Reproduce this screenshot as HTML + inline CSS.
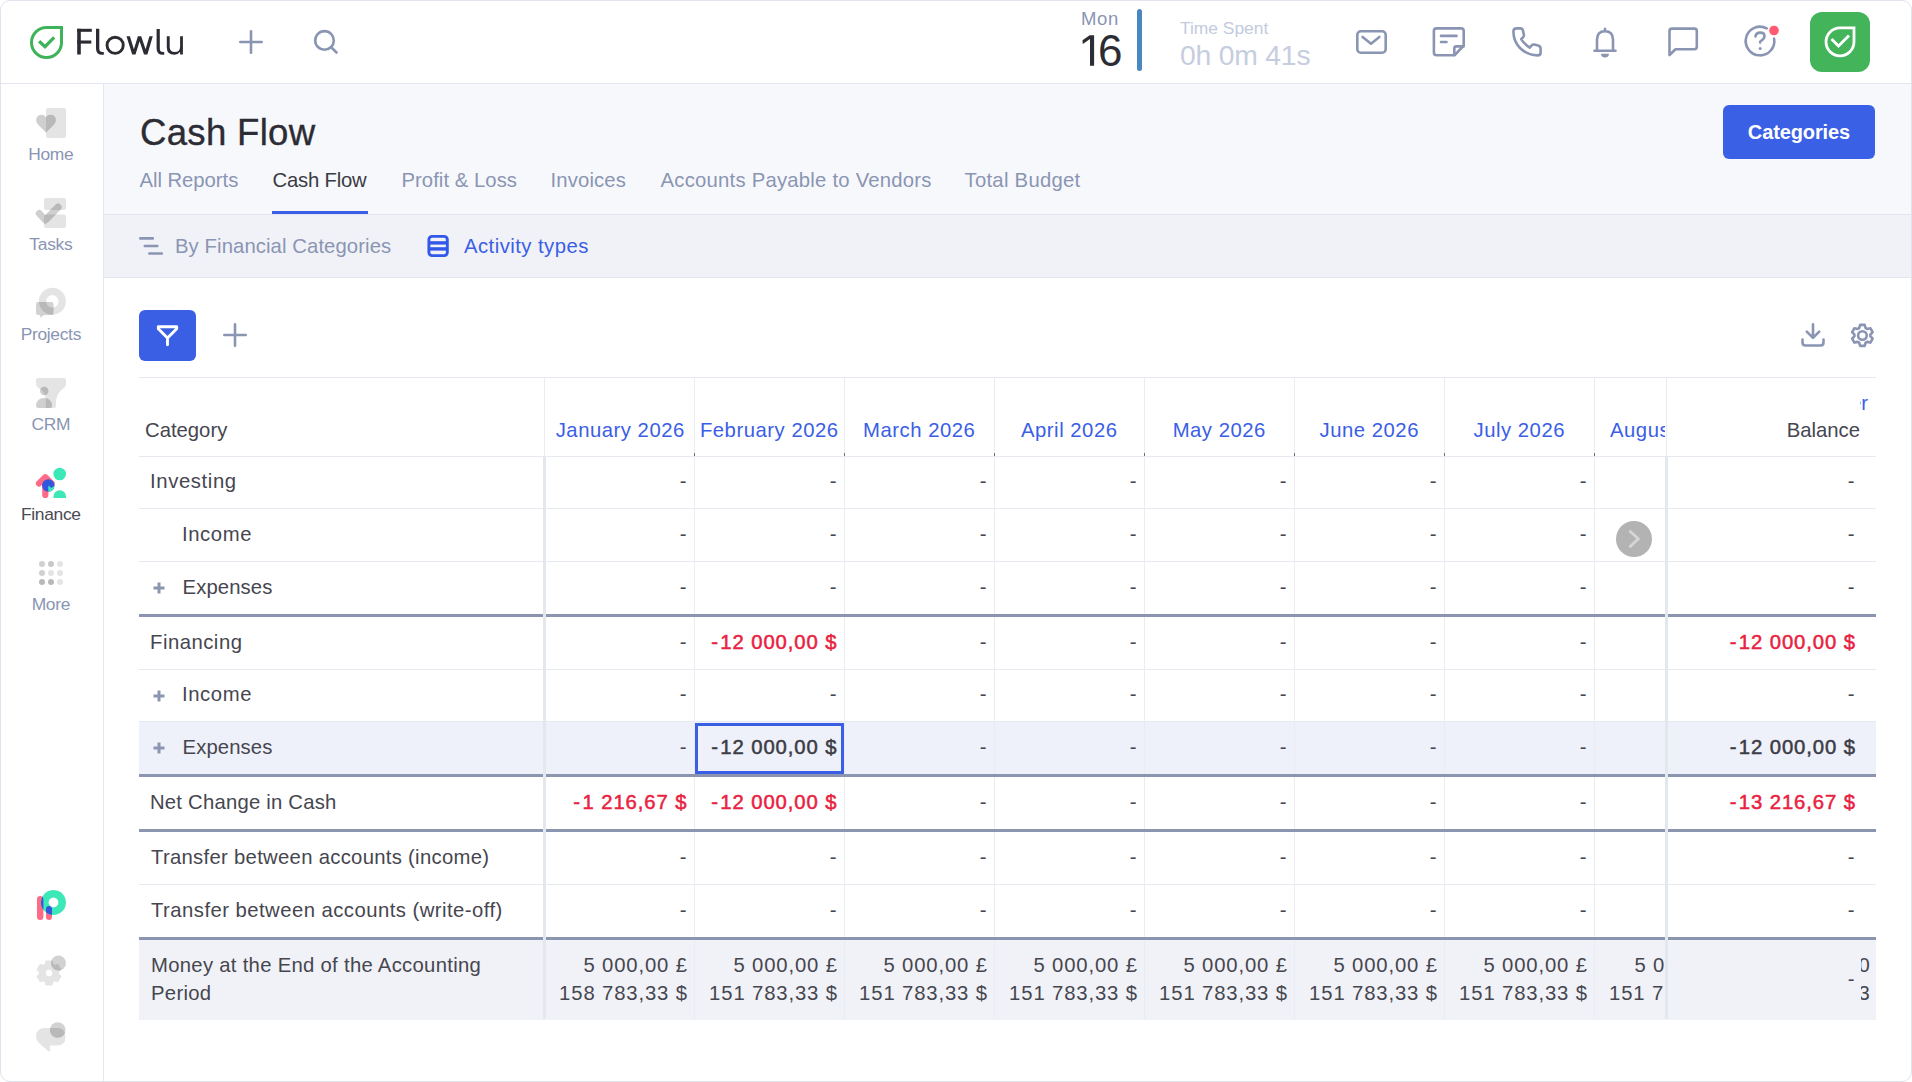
<!DOCTYPE html>
<html><head><meta charset="utf-8"><title>Cash Flow</title>
<style>
html,body{margin:0;padding:0;width:1912px;height:1082px;overflow:hidden;background:#ffffff;}
body{font-family:"Liberation Sans",sans-serif;position:relative;}
.frame{position:absolute;left:0;top:0;width:1912px;height:1082px;overflow:hidden;background:#fff;}
.bord{position:absolute;left:0;top:0;width:1912px;height:1082px;box-sizing:border-box;border:1px solid #e1e4ef;border-radius:10px;z-index:50;}
.t{position:absolute;white-space:nowrap;}
.abs{position:absolute;}
svg{position:absolute;overflow:visible;}
</style></head><body>
<div class="frame">
<div class="abs" style="left:0;top:83px;width:1912px;height:1px;background:#e4e7ef"></div>
<div class="abs" style="left:103px;top:84px;width:1px;height:1000px;background:#e4e7ef"></div>
<div class="abs" style="left:104px;top:84px;width:1808px;height:130px;background:#f7f8fc"></div>
<div class="abs" style="left:104px;top:214px;width:1808px;height:1px;background:#e3e6ee"></div>
<div class="abs" style="left:104px;top:215px;width:1808px;height:62px;background:#f1f2f7"></div>
<div class="abs" style="left:104px;top:277px;width:1808px;height:1px;background:#e3e6ee"></div>
<svg style="left:0;top:0" width="1912" height="84" viewBox="0 0 1912 84">
<path d="M46.5,27.5 H61.5 V42.5 A15,15 0 1 1 46.5,27.5 Z" fill="none" stroke="#3fb35a" stroke-width="3"/>
<path d="M39.1,41.2 L45,46.6 L54.2,37.4" fill="none" stroke="#3fb35a" stroke-width="3.3"/>
<g fill="none" stroke="#8a95b3" stroke-width="2.6" stroke-linecap="round" stroke-linejoin="round">
<path d="M240.3,42 H261.7 M251,31.3 V52.7"/>
<circle cx="324.5" cy="40.4" r="9.3"/><path d="M331.5,47.5 L336.5,52.5"/>
<rect x="1357.3" y="31.3" width="28.4" height="21.4" rx="3.5"/>
<path d="M1362.6,37 L1371,43.7 L1379.4,37"/>
<path d="M1454.5,55.3 H1436.6 Q1433.9,55.3 1433.9,52.6 V31.1 Q1433.9,28.4 1436.6,28.4 H1461 Q1463.7,28.4 1463.7,31.1 V45.5 Z"/>
<path d="M1454.3,55 V48.5 Q1454.3,46.4 1456.4,46.4 H1463.5"/>
<path d="M1441,35.9 H1456.5 M1441,42 H1446.5"/>
<path d="M1516.5,28.4 H1520.5 Q1522.3,28.4 1522.8,30.2 L1523.9,34.6 Q1524.2,36.2 1523,37.3 L1521.2,39.1 Q1524.5,44.5 1529.8,47.6 L1531.6,45.5 Q1532.7,44.3 1534.3,44.6 L1538,45.4 Q1540.6,46 1540.6,48.6 V52.4 Q1540.6,55.4 1537.6,55.4 Q1527,55 1520,48 Q1513.6,41.5 1513.4,31.6 Q1513.4,28.4 1516.5,28.4 Z"/>
<path d="M1605,28.7 V31 M1597,50 V39.5 Q1597,31.2 1605,31.2 Q1613,31.2 1613,39.5 V50 M1594.5,50.8 H1615.5"/>
<path d="M1669.5,55 V31 Q1669.5,28.6 1672,28.6 H1694.5 Q1696.8,28.6 1696.8,31 V46.8 Q1696.8,49.2 1694.5,49.2 H1675.5 Z"/>
<path d="M1766.7,28.4 A14.3,14.3 0 1 0 1774.1,38.6"/>
<path d="M1755.5,36.5 Q1756,32.6 1760.3,32.6 Q1764.5,32.6 1764.5,36.3 Q1764.5,39 1760.2,41.5 V42.5"/>
</g>
<circle cx="1760.2" cy="48.5" r="1.5" fill="#8a95b3"/>
<path d="M1601,53.8 H1609 A4,3.6 0 0 1 1601,53.8 Z" fill="#8a95b3"/>
<circle cx="1774" cy="30.5" r="4.8" fill="#ff5a72"/>
<rect x="1810" y="12" width="60" height="60" rx="12" fill="#43b45a"/>
<path d="M1840,27.8 H1854 V41.8 A14,14 0 1 1 1840,27.8 Z" fill="none" stroke="#fff" stroke-width="2.8"/>
<path d="M1832.5,40 L1838.5,46 L1848,36.5" fill="none" stroke="#fff" stroke-width="2.8" stroke-linecap="square"/>
<rect x="1137" y="9" width="5" height="62" rx="2.5" fill="#4a86bf"/>
</svg>
<svg style="left:0;top:0" width="200" height="84" viewBox="0 0 200 84"><g fill="#2b2b33">
<rect x="77.2" y="28.8" width="3.6" height="25.7"/><rect x="77.2" y="28.8" width="14.6" height="3"/><rect x="77.2" y="40.5" width="14.1" height="3.1"/>
<path d="M96,28.8 H99.3 V48.8 Q99.3,52.1 102.6,52.1 H103.8 V54.8 H102.3 Q96,54.8 96,48.5 Z"/>
<path d="M126.5,36.2 H129.9 L133.87,49.23 L137.9,36.2 H141.2 L145.58,49.2 L149.4,36.2 H152.8 L147.4,54.6 H144 L139.61,41.35 L135.5,54.6 H132.2 Z"/>
<path d="M156.6,28.9 H159.8 V48.8 Q159.8,52 163,52 H164.2 V54.8 H162.8 Q156.6,54.8 156.6,48.5 Z"/>
<path d="M166.8,36.2 H169.7 V47 Q169.7,52.1 174.9,52.1 Q180.1,52.1 180.1,46.5 V36.2 H182.9 V54.6 H180.1 V51.8 Q178,54.8 174.5,54.8 Q166.8,54.8 166.8,47.2 Z"/>
</g><circle cx="115.15" cy="45.3" r="8.1" fill="none" stroke="#2b2b33" stroke-width="2.9"/></svg>
<div class="t " style="top:7.00px;font-size:18.5px;line-height:23px;color:#8a95b3;letter-spacing:0.7px;left:1081px;">Mon</div>
<div class="t " style="top:23.00px;font-size:44px;line-height:55px;color:#2c2c34;left:1098px;">6</div>
<svg style="left:0;top:0" width="1100" height="80" viewBox="0 0 1100 80"><path d="M1082.5,40.2 L1089.7,35.2 H1094.1 V65.8 H1090 V38.9 L1082.8,44 Z" fill="#2c2c34"/></svg>
<div class="t " style="top:16.70px;font-size:17.4px;line-height:22px;color:#c3cbdd;left:1180px;">Time Spent</div>
<div class="t " style="top:38.00px;font-size:28.3px;line-height:35px;color:#c5cddf;letter-spacing:-0.2px;left:1180px;">0h 0m 41s</div>
<svg style="left:0;top:0" width="104" height="1082" viewBox="0 0 104 1082">
<defs>
<clipPath id="cHome"><rect x="46" y="108" width="20" height="30" rx="2"/></clipPath>
<clipPath id="cTasks"><rect x="44" y="198" width="22" height="12" rx="2"/><rect x="44" y="214.5" width="22" height="13.5" rx="2"/></clipPath>
<clipPath id="cProj"><path d="M52.4,287.8 A13.5,13.5 0 1 1 52.39,287.8 Z M52.4,295.1 A6.2,6.2 0 1 0 52.41,295.1 Z" clip-rule="evenodd"/></clipPath>
<clipPath id="cCrm"><path d="M38,378 H64 Q66,378 66,380 V384 Q66,386.5 64,388 C59,391.5 56,396 56,403 V406 Q56,408 54,408 H45.8 V398.5 Q44.5,391 38,387.5 Q36,386 36,384 V380 Q36,378 38,378 Z"/></clipPath>
<clipPath id="cGear"><circle cx="58.5" cy="963" r="7.5"/></clipPath>
<clipPath id="cChat"><circle cx="57.7" cy="1030" r="7.8"/></clipPath>
<clipPath id="cRing"><path d="M53.5,889.9 A12.5,12.5 0 1 1 53.49,889.9 Z M53.5,897.5 A4.9,4.9 0 1 0 53.51,897.5 Z" clip-rule="evenodd"/></clipPath>
</defs>
<!-- Home -->
<rect x="46" y="108" width="20" height="30" rx="2" fill="#e4e4e4"/>
<path id="heart" d="M46,132.5 L38.2,124.7 C35.3,121.8 35.6,117 39,115.3 C42,113.8 44.8,115 46,117.5 C47.2,115 50,113.8 53,115.3 C56.4,117 56.7,121.8 53.8,124.7 Z" fill="#cfcfcf"/>
<g clip-path="url(#cHome)"><path d="M46,132.5 L38.2,124.7 C35.3,121.8 35.6,117 39,115.3 C42,113.8 44.8,115 46,117.5 C47.2,115 50,113.8 53,115.3 C56.4,117 56.7,121.8 53.8,124.7 Z" fill="#b9b9b9"/></g>
<!-- Tasks -->
<rect x="44" y="198" width="22" height="12" rx="2" fill="#e4e4e4"/>
<rect x="44" y="214.5" width="22" height="13.5" rx="2" fill="#e4e4e4"/>
<path d="M39.3,213.5 L45.3,220 L58,207.3" fill="none" stroke="#cfcfcf" stroke-width="7" stroke-linecap="round" stroke-linejoin="round"/>
<g clip-path="url(#cTasks)"><path d="M39.3,213.5 L45.3,220 L58,207.3" fill="none" stroke="#b9b9b9" stroke-width="7" stroke-linecap="round" stroke-linejoin="round"/></g>
<!-- Projects -->
<circle cx="52.4" cy="301.3" r="9.85" fill="none" stroke="#e4e4e4" stroke-width="7.3"/>
<path d="M38,302 H51.5 Q53.5,302 53.5,304 V313 Q53.5,315 51.5,315 H44 L40.6,317.8 L40,315 H38 Q36,315 36,313 V304 Q36,302 38,302 Z" fill="#d2d2d2"/>
<g clip-path="url(#cProj)"><path d="M38,302 H51.5 Q53.5,302 53.5,304 V313 Q53.5,315 51.5,315 H44 L40.6,317.8 L40,315 H38 Q36,315 36,313 V304 Q36,302 38,302 Z" fill="#b9b9b9"/></g>
<!-- CRM -->
<path d="M38,378 H64 Q66,378 66,380 V384 Q66,386.5 64,388 C59,391.5 56,396 56,403 V406 Q56,408 54,408 H45.8 V398.5 Q44.5,391 38,387.5 Q36,386 36,384 V380 Q36,378 38,378 Z" fill="#e4e4e4"/>
<circle cx="44.2" cy="391" r="4.2" fill="#cfcfcf"/>
<path d="M36,405.5 C36,401 39.5,398 44,398 C48.5,398 52,401 52,405.5 Q52,408 49.5,408 H38.5 Q36,408 36,405.5 Z" fill="#d0d0d0"/>
<g clip-path="url(#cCrm)"><circle cx="44.2" cy="391" r="4.2" fill="#b9b9b9"/><path d="M36,405.5 C36,401 39.5,398 44,398 C48.5,398 52,401 52,405.5 Q52,408 49.5,408 H38.5 Q36,408 36,405.5 Z" fill="#b9b9b9"/></g>
<!-- Finance -->
<path d="M39,483.5 L45.3,477.2 L51.6,483.5 M45.3,477.5 V495" fill="none" stroke="#ff6b86" stroke-width="6.2" stroke-linecap="round" stroke-linejoin="round"/>
<circle cx="48.3" cy="485.5" r="6.2" fill="#3256dc"/>
<path d="M48.3,485.5 L51.5,488 Q53,486.5 54.5,486 A6.2,6.2 0 0 1 48.3,491.7 Z" fill="#3de8b8"/>
<circle cx="59.7" cy="474" r="6.3" fill="#3de8b8"/>
<path d="M53.5,498 V496.5 A6.25,6.25 0 0 1 66,496.5 V498 Z" fill="#3de8b8"/>
<!-- More -->
<g>
<circle cx="42" cy="564" r="3" fill="#d0d0d0"/><circle cx="51" cy="564" r="3" fill="#c9c9c9"/><circle cx="60" cy="564" r="3" fill="#e4e4e4"/>
<circle cx="42" cy="573" r="3" fill="#d0d0d0"/><circle cx="51" cy="573" r="3" fill="#e4e4e4"/><circle cx="60" cy="573" r="3" fill="#e4e4e4"/>
<circle cx="42" cy="582" r="3" fill="#b9b9b9"/><circle cx="51" cy="582" r="3" fill="#b9b9b9"/><circle cx="60" cy="582" r="3" fill="#e4e4e4"/>
</g>
<!-- P logo -->
<rect x="37" y="896" width="6.4" height="24" rx="3.2" fill="#ff6b86"/>
<rect x="46" y="906" width="6" height="14" rx="3" fill="#ff6b86"/>
<path d="M53.5,889.9 A12.5,12.5 0 1 1 53.49,889.9 Z M53.5,897.5 A4.9,4.9 0 1 0 53.51,897.5 Z" fill="#3de8b8" fill-rule="evenodd"/>
<g clip-path="url(#cRing)"><rect x="37" y="896" width="6.4" height="24" rx="3.2" fill="#3256dc"/><rect x="46" y="906" width="6" height="14" rx="3" fill="#3256dc"/></g>
<!-- gear -->
<path d="M53.15,963.68 L52.58,960.50 L45.42,960.50 L44.85,963.68 L43.00,964.75 L39.97,963.65 L36.39,969.86 L38.86,971.93 L38.86,974.07 L36.39,976.14 L39.97,982.35 L43.00,981.25 L44.85,982.32 L45.42,985.50 L52.58,985.50 L53.15,982.32 L55.00,981.25 L58.03,982.35 L61.61,976.14 L59.14,974.07 L59.14,971.93 L61.61,969.86 L58.03,963.65 L55.00,964.75Z" fill="#e4e4e4"/>
<circle cx="49" cy="973" r="3.2" fill="#fff"/>
<circle cx="58.5" cy="963" r="7.5" fill="#d2d2d2"/>
<g clip-path="url(#cGear)"><path d="M53.15,963.68 L52.58,960.50 L45.42,960.50 L44.85,963.68 L43.00,964.75 L39.97,963.65 L36.39,969.86 L38.86,971.93 L38.86,974.07 L36.39,976.14 L39.97,982.35 L43.00,981.25 L44.85,982.32 L45.42,985.50 L52.58,985.50 L53.15,982.32 L55.00,981.25 L58.03,982.35 L61.61,976.14 L59.14,974.07 L59.14,971.93 L61.61,969.86 L58.03,963.65 L55.00,964.75Z" fill="#b9b9b9"/></g>
<!-- chat -->
<path d="M45,1028 H57 Q65.5,1028 65.5,1036.8 Q65.5,1045.6 57,1045.6 H49.9 V1050 Q49.9,1052.5 48,1051 L38.5,1042.5 Q36,1040 36,1036.8 Q36,1028 45,1028 Z" fill="#e4e4e4"/>
<circle cx="57.7" cy="1030" r="7.8" fill="#d2d2d2"/>
<g clip-path="url(#cChat)"><path d="M45,1028 H57 Q65.5,1028 65.5,1036.8 Q65.5,1045.6 57,1045.6 H49.9 V1050 Q49.9,1052.5 48,1051 L38.5,1042.5 Q36,1040 36,1036.8 Q36,1028 45,1028 Z" fill="#b9b9b9"/></g>
</svg>
<div class="t " style="top:143.00px;font-size:17.4px;line-height:22px;color:#8a95b3;letter-spacing:-0.3px;left:0.85px;width:100px;text-align:center;">Home</div>
<div class="t " style="top:233.00px;font-size:17.4px;line-height:22px;color:#8a95b3;letter-spacing:-0.3px;left:0.85px;width:100px;text-align:center;">Tasks</div>
<div class="t " style="top:323.00px;font-size:17.4px;line-height:22px;color:#8a95b3;letter-spacing:-0.3px;left:0.85px;width:100px;text-align:center;">Projects</div>
<div class="t " style="top:413.00px;font-size:17.4px;line-height:22px;color:#8a95b3;letter-spacing:-0.3px;left:0.85px;width:100px;text-align:center;">CRM</div>
<div class="t " style="top:503.00px;font-size:17.4px;line-height:22px;color:#4a4a54;letter-spacing:-0.3px;left:0.85px;width:100px;text-align:center;">Finance</div>
<div class="t " style="top:593.00px;font-size:17.4px;line-height:22px;color:#8a95b3;letter-spacing:-0.3px;left:0.85px;width:100px;text-align:center;">More</div>
<div class="t " style="top:110.00px;font-size:36.6px;line-height:46px;color:#2c2c34;letter-spacing:0.3px;left:140px;-webkit-text-stroke:0.35px #2c2c34;">Cash Flow</div>
<div class="t " style="top:168.00px;font-size:20.3px;line-height:25px;color:#8a95b3;letter-spacing:-0.04px;left:139.5px;">All Reports</div>
<div class="t " style="top:168.00px;font-size:20.3px;line-height:25px;color:#3b3b44;letter-spacing:-0.2px;left:272.5px;">Cash Flow</div>
<div class="t " style="top:168.00px;font-size:20.3px;line-height:25px;color:#8a95b3;letter-spacing:0.04px;left:401.5px;">Profit &amp; Loss</div>
<div class="t " style="top:168.00px;font-size:20.3px;line-height:25px;color:#8a95b3;letter-spacing:0.14px;left:550.5px;">Invoices</div>
<div class="t " style="top:168.00px;font-size:20.3px;line-height:25px;color:#8a95b3;letter-spacing:0.23px;left:660.5px;">Accounts Payable to Vendors</div>
<div class="t " style="top:168.00px;font-size:20.3px;line-height:25px;color:#8a95b3;letter-spacing:0.27px;left:964.5px;">Total Budget</div>
<div class="abs" style="left:272px;top:211px;width:96px;height:3px;background:#3a5ee6"></div>
<div class="abs" style="left:1723px;top:105px;width:152px;height:54px;border-radius:6px;background:#3a60e6"></div>
<div class="t " style="top:120.00px;font-size:20px;line-height:25px;color:#ffffff;letter-spacing:-0.12px;font-weight:700;left:1722.94px;width:152px;text-align:center;">Categories</div>
<svg style="left:0;top:0" width="1912" height="400" viewBox="0 0 1912 400">
<g stroke="#8a95b3" stroke-width="2.6" stroke-linecap="round"><path d="M140.3,238.4 H152.8 M144.8,246 H157.3 M149.3,253.5 H161.8"/></g>
<rect x="428.9" y="236.4" width="18.4" height="19.2" rx="3.2" fill="none" stroke="#3158e6" stroke-width="2.9"/>
<rect x="430" y="241.2" width="16" height="3.4" fill="#3158e6"/>
<rect x="430" y="247.2" width="16" height="3.4" fill="#3158e6"/>
<!-- filter button -->
<rect x="139" y="310" width="57" height="51" rx="6" fill="#3a5fe5"/>
<path d="M158.3,326.8 H176.7 V328.8 L167.5,338 L158.3,328.8 Z M167.5,338 V344.7" fill="none" stroke="#fff" stroke-width="2.9" stroke-linejoin="round" stroke-linecap="round"/>
<path d="M224.3,335 H245.7 M235,324.3 V345.7" stroke="#8a95b3" stroke-width="2.6" stroke-linecap="round"/>
<!-- download -->
<g fill="none" stroke="#8a95b3" stroke-width="2.6" stroke-linecap="round" stroke-linejoin="round">
<path d="M1813,324.3 V337.5 M1806.8,331.6 L1813,337.8 L1819.2,331.6"/>
<path d="M1802.5,339.5 V342.5 Q1802.5,345.5 1805.5,345.5 H1820.5 Q1823.5,345.5 1823.5,342.5 V339.5"/>
<path d="M1865.65,328.09 L1864.64,324.88 L1860.16,324.88 L1859.15,328.09 L1857.70,328.93 L1854.41,328.21 L1852.18,332.08 L1854.44,334.56 L1854.44,336.24 L1852.18,338.72 L1854.41,342.59 L1857.70,341.87 L1859.15,342.71 L1860.16,345.92 L1864.64,345.92 L1865.65,342.71 L1867.10,341.87 L1870.39,342.59 L1872.62,338.72 L1870.36,336.24 L1870.36,334.56 L1872.62,332.08 L1870.39,328.21 L1867.10,328.93Z"/>
<circle cx="1862.4" cy="335.5" r="4.3"/>
</g>
</svg>
<div class="t " style="top:234.00px;font-size:20.3px;line-height:25px;color:#8a95b3;letter-spacing:0.09px;left:175px;">By Financial Categories</div>
<div class="t " style="top:234.00px;font-size:20.3px;line-height:25px;color:#3a5ee6;letter-spacing:0.46px;left:464px;">Activity types</div>
<div class="abs" style="left:139px;top:722px;width:1737px;height:52px;background:#eef0fa"></div>
<div class="abs" style="left:139px;top:940px;width:1737px;height:80px;background:#f1f2f7"></div>
<div class="abs" style="left:139px;top:377px;width:1737px;height:1px;background:#e6e9f0"></div>
<div class="abs" style="left:139px;top:456px;width:1737px;height:1px;background:#e6e9f0"></div>
<div class="abs" style="left:139px;top:508px;width:1737px;height:1px;background:#e6e9f0"></div>
<div class="abs" style="left:139px;top:561px;width:1737px;height:1px;background:#e6e9f0"></div>
<div class="abs" style="left:139px;top:614px;width:1737px;height:3px;background:#8b95b0"></div>
<div class="abs" style="left:139px;top:669px;width:1737px;height:1px;background:#e6e9f0"></div>
<div class="abs" style="left:139px;top:721px;width:1737px;height:1px;background:#e6e9f0"></div>
<div class="abs" style="left:139px;top:774px;width:1737px;height:3px;background:#8b95b0"></div>
<div class="abs" style="left:139px;top:829px;width:1737px;height:3px;background:#8b95b0"></div>
<div class="abs" style="left:139px;top:884px;width:1737px;height:1px;background:#e6e9f0"></div>
<div class="abs" style="left:139px;top:937px;width:1737px;height:3px;background:#8b95b0"></div>
<div class="abs" style="left:694px;top:378px;width:1px;height:641px;background:#e9ecf2"></div>
<div class="abs" style="left:694px;top:453px;width:1px;height:3px;background:#6b7080"></div>
<div class="abs" style="left:844px;top:378px;width:1px;height:641px;background:#e9ecf2"></div>
<div class="abs" style="left:844px;top:453px;width:1px;height:3px;background:#6b7080"></div>
<div class="abs" style="left:994px;top:378px;width:1px;height:641px;background:#e9ecf2"></div>
<div class="abs" style="left:994px;top:453px;width:1px;height:3px;background:#6b7080"></div>
<div class="abs" style="left:1144px;top:378px;width:1px;height:641px;background:#e9ecf2"></div>
<div class="abs" style="left:1144px;top:453px;width:1px;height:3px;background:#6b7080"></div>
<div class="abs" style="left:1294px;top:378px;width:1px;height:641px;background:#e9ecf2"></div>
<div class="abs" style="left:1294px;top:453px;width:1px;height:3px;background:#6b7080"></div>
<div class="abs" style="left:1444px;top:378px;width:1px;height:641px;background:#e9ecf2"></div>
<div class="abs" style="left:1444px;top:453px;width:1px;height:3px;background:#6b7080"></div>
<div class="abs" style="left:1594px;top:378px;width:1px;height:641px;background:#e9ecf2"></div>
<div class="abs" style="left:1594px;top:453px;width:1px;height:3px;background:#6b7080"></div>
<div class="abs" style="left:139px;top:614px;width:1737px;height:3px;background:#8b95b0"></div>
<div class="abs" style="left:139px;top:774px;width:1737px;height:3px;background:#8b95b0"></div>
<div class="abs" style="left:139px;top:829px;width:1737px;height:3px;background:#8b95b0"></div>
<div class="abs" style="left:139px;top:937px;width:1737px;height:3px;background:#8b95b0"></div>
<div class="abs" style="left:544px;top:378px;width:1px;height:78px;background:#e9ecf2"></div>
<div class="abs" style="left:1666px;top:378px;width:1px;height:78px;background:#e9ecf2"></div>
<div class="abs" style="left:543px;top:457px;width:3px;height:562px;background:#e3e8ef"></div>
<div class="abs" style="left:1665px;top:457px;width:3px;height:562px;background:#e3e8ef"></div>
<div class="t " style="top:418.00px;font-size:20.3px;line-height:25px;color:#46464f;left:145px;">Category</div>
<div class="t " style="top:418.00px;font-size:20.3px;line-height:25px;color:#3a5ee6;letter-spacing:0.52px;left:545.26px;width:150px;text-align:center;">January 2026</div>
<div class="t " style="top:418.00px;font-size:20.3px;line-height:25px;color:#3a5ee6;letter-spacing:0.52px;left:694.26px;width:150px;text-align:center;">February 2026</div>
<div class="t " style="top:418.00px;font-size:20.3px;line-height:25px;color:#3a5ee6;letter-spacing:0.52px;left:844.26px;width:150px;text-align:center;">March 2026</div>
<div class="t " style="top:418.00px;font-size:20.3px;line-height:25px;color:#3a5ee6;letter-spacing:0.52px;left:994.26px;width:150px;text-align:center;">April 2026</div>
<div class="t " style="top:418.00px;font-size:20.3px;line-height:25px;color:#3a5ee6;letter-spacing:0.52px;left:1144.26px;width:150px;text-align:center;">May 2026</div>
<div class="t " style="top:418.00px;font-size:20.3px;line-height:25px;color:#3a5ee6;letter-spacing:0.52px;left:1294.26px;width:150px;text-align:center;">June 2026</div>
<div class="t " style="top:418.00px;font-size:20.3px;line-height:25px;color:#3a5ee6;letter-spacing:0.52px;left:1444.26px;width:150px;text-align:center;">July 2026</div>
<div class="abs" style="left:1595px;top:400px;width:70px;height:50px;overflow:hidden"><div class="t " style="top:18.00px;font-size:20.3px;line-height:25px;color:#3a5ee6;letter-spacing:0.52px;left:15px;">August 2026</div>
</div>
<div class="t " style="top:418.00px;font-size:20.3px;line-height:25px;color:#46464f;left:1660.00px;width:200px;text-align:right;">Balance</div>
<div class="abs" style="left:1860px;top:390px;width:11px;height:30px;overflow:hidden"><div class="t " style="top:1.00px;font-size:20.3px;line-height:25px;color:#3a5ee6;left:-10.1px;">er</div>
</div>
<div class="t " style="top:469.00px;font-size:20.3px;line-height:25px;color:#46464f;letter-spacing:0.62px;left:150px;">Investing</div>
<div class="t " style="top:469.00px;font-size:20.3px;line-height:25px;color:#46464f;left:538.50px;width:148px;text-align:right;">-</div>
<div class="t " style="top:469.00px;font-size:20.3px;line-height:25px;color:#46464f;left:688.50px;width:148px;text-align:right;">-</div>
<div class="t " style="top:469.00px;font-size:20.3px;line-height:25px;color:#46464f;left:838.50px;width:148px;text-align:right;">-</div>
<div class="t " style="top:469.00px;font-size:20.3px;line-height:25px;color:#46464f;left:988.50px;width:148px;text-align:right;">-</div>
<div class="t " style="top:469.00px;font-size:20.3px;line-height:25px;color:#46464f;left:1138.50px;width:148px;text-align:right;">-</div>
<div class="t " style="top:469.00px;font-size:20.3px;line-height:25px;color:#46464f;left:1288.50px;width:148px;text-align:right;">-</div>
<div class="t " style="top:469.00px;font-size:20.3px;line-height:25px;color:#46464f;left:1438.50px;width:148px;text-align:right;">-</div>
<div class="t " style="top:469.00px;font-size:20.3px;line-height:25px;color:#46464f;left:1654.50px;width:200px;text-align:right;">-</div>
<div class="t " style="top:521.50px;font-size:20.3px;line-height:25px;color:#46464f;letter-spacing:0.6px;left:182px;">Income</div>
<div class="t " style="top:521.50px;font-size:20.3px;line-height:25px;color:#46464f;left:538.50px;width:148px;text-align:right;">-</div>
<div class="t " style="top:521.50px;font-size:20.3px;line-height:25px;color:#46464f;left:688.50px;width:148px;text-align:right;">-</div>
<div class="t " style="top:521.50px;font-size:20.3px;line-height:25px;color:#46464f;left:838.50px;width:148px;text-align:right;">-</div>
<div class="t " style="top:521.50px;font-size:20.3px;line-height:25px;color:#46464f;left:988.50px;width:148px;text-align:right;">-</div>
<div class="t " style="top:521.50px;font-size:20.3px;line-height:25px;color:#46464f;left:1138.50px;width:148px;text-align:right;">-</div>
<div class="t " style="top:521.50px;font-size:20.3px;line-height:25px;color:#46464f;left:1288.50px;width:148px;text-align:right;">-</div>
<div class="t " style="top:521.50px;font-size:20.3px;line-height:25px;color:#46464f;left:1438.50px;width:148px;text-align:right;">-</div>
<div class="t " style="top:521.50px;font-size:20.3px;line-height:25px;color:#46464f;left:1654.50px;width:200px;text-align:right;">-</div>
<div class="t " style="top:574.50px;font-size:20.3px;line-height:25px;color:#46464f;letter-spacing:0.12px;left:182.5px;">Expenses</div>
<svg style="left:150px;top:580.0px" width="18" height="16" viewBox="0 0 18 16"><path d="M3.5,8 H14.5 M9,2.5 V13.5" stroke="#8b95b0" stroke-width="3"/></svg>
<div class="t " style="top:574.50px;font-size:20.3px;line-height:25px;color:#46464f;left:538.50px;width:148px;text-align:right;">-</div>
<div class="t " style="top:574.50px;font-size:20.3px;line-height:25px;color:#46464f;left:688.50px;width:148px;text-align:right;">-</div>
<div class="t " style="top:574.50px;font-size:20.3px;line-height:25px;color:#46464f;left:838.50px;width:148px;text-align:right;">-</div>
<div class="t " style="top:574.50px;font-size:20.3px;line-height:25px;color:#46464f;left:988.50px;width:148px;text-align:right;">-</div>
<div class="t " style="top:574.50px;font-size:20.3px;line-height:25px;color:#46464f;left:1138.50px;width:148px;text-align:right;">-</div>
<div class="t " style="top:574.50px;font-size:20.3px;line-height:25px;color:#46464f;left:1288.50px;width:148px;text-align:right;">-</div>
<div class="t " style="top:574.50px;font-size:20.3px;line-height:25px;color:#46464f;left:1438.50px;width:148px;text-align:right;">-</div>
<div class="t " style="top:574.50px;font-size:20.3px;line-height:25px;color:#46464f;left:1654.50px;width:200px;text-align:right;">-</div>
<div class="t " style="top:629.50px;font-size:20.3px;line-height:25px;color:#46464f;letter-spacing:0.5px;left:150px;">Financing</div>
<div class="t " style="top:629.50px;font-size:20.3px;line-height:25px;color:#46464f;left:538.50px;width:148px;text-align:right;">-</div>
<div class="t " style="top:629.50px;font-size:20.3px;line-height:25px;color:#e8223f;letter-spacing:0.9px;left:689.40px;width:148px;text-align:right;-webkit-text-stroke:0.5px #e8223f;"><span style="margin-right:1.5px">-</span>12 000,00 $</div>
<div class="t " style="top:629.50px;font-size:20.3px;line-height:25px;color:#46464f;left:838.50px;width:148px;text-align:right;">-</div>
<div class="t " style="top:629.50px;font-size:20.3px;line-height:25px;color:#46464f;left:988.50px;width:148px;text-align:right;">-</div>
<div class="t " style="top:629.50px;font-size:20.3px;line-height:25px;color:#46464f;left:1138.50px;width:148px;text-align:right;">-</div>
<div class="t " style="top:629.50px;font-size:20.3px;line-height:25px;color:#46464f;left:1288.50px;width:148px;text-align:right;">-</div>
<div class="t " style="top:629.50px;font-size:20.3px;line-height:25px;color:#46464f;left:1438.50px;width:148px;text-align:right;">-</div>
<div class="t " style="top:629.50px;font-size:20.3px;line-height:25px;color:#e8223f;letter-spacing:0.9px;left:1655.90px;width:200px;text-align:right;-webkit-text-stroke:0.5px #e8223f;"><span style="margin-right:1.5px">-</span>12 000,00 $</div>
<div class="t " style="top:682.00px;font-size:20.3px;line-height:25px;color:#46464f;letter-spacing:0.6px;left:182px;">Income</div>
<svg style="left:150px;top:687.5px" width="18" height="16" viewBox="0 0 18 16"><path d="M3.5,8 H14.5 M9,2.5 V13.5" stroke="#8b95b0" stroke-width="3"/></svg>
<div class="t " style="top:682.00px;font-size:20.3px;line-height:25px;color:#46464f;left:538.50px;width:148px;text-align:right;">-</div>
<div class="t " style="top:682.00px;font-size:20.3px;line-height:25px;color:#46464f;left:688.50px;width:148px;text-align:right;">-</div>
<div class="t " style="top:682.00px;font-size:20.3px;line-height:25px;color:#46464f;left:838.50px;width:148px;text-align:right;">-</div>
<div class="t " style="top:682.00px;font-size:20.3px;line-height:25px;color:#46464f;left:988.50px;width:148px;text-align:right;">-</div>
<div class="t " style="top:682.00px;font-size:20.3px;line-height:25px;color:#46464f;left:1138.50px;width:148px;text-align:right;">-</div>
<div class="t " style="top:682.00px;font-size:20.3px;line-height:25px;color:#46464f;left:1288.50px;width:148px;text-align:right;">-</div>
<div class="t " style="top:682.00px;font-size:20.3px;line-height:25px;color:#46464f;left:1438.50px;width:148px;text-align:right;">-</div>
<div class="t " style="top:682.00px;font-size:20.3px;line-height:25px;color:#46464f;left:1654.50px;width:200px;text-align:right;">-</div>
<div class="t " style="top:734.50px;font-size:20.3px;line-height:25px;color:#46464f;letter-spacing:0.12px;left:182.5px;">Expenses</div>
<svg style="left:150px;top:740.0px" width="18" height="16" viewBox="0 0 18 16"><path d="M3.5,8 H14.5 M9,2.5 V13.5" stroke="#8b95b0" stroke-width="3"/></svg>
<div class="t " style="top:734.50px;font-size:20.3px;line-height:25px;color:#46464f;left:538.50px;width:148px;text-align:right;">-</div>
<div class="t " style="top:734.50px;font-size:20.3px;line-height:25px;color:#3c3c45;letter-spacing:0.9px;left:689.40px;width:148px;text-align:right;-webkit-text-stroke:0.5px #3c3c45;"><span style="margin-right:1.5px">-</span>12 000,00 $</div>
<div class="t " style="top:734.50px;font-size:20.3px;line-height:25px;color:#46464f;left:838.50px;width:148px;text-align:right;">-</div>
<div class="t " style="top:734.50px;font-size:20.3px;line-height:25px;color:#46464f;left:988.50px;width:148px;text-align:right;">-</div>
<div class="t " style="top:734.50px;font-size:20.3px;line-height:25px;color:#46464f;left:1138.50px;width:148px;text-align:right;">-</div>
<div class="t " style="top:734.50px;font-size:20.3px;line-height:25px;color:#46464f;left:1288.50px;width:148px;text-align:right;">-</div>
<div class="t " style="top:734.50px;font-size:20.3px;line-height:25px;color:#46464f;left:1438.50px;width:148px;text-align:right;">-</div>
<div class="t " style="top:734.50px;font-size:20.3px;line-height:25px;color:#3c3c45;letter-spacing:0.9px;left:1655.90px;width:200px;text-align:right;-webkit-text-stroke:0.5px #3c3c45;"><span style="margin-right:1.5px">-</span>12 000,00 $</div>
<div class="t " style="top:789.50px;font-size:20.3px;line-height:25px;color:#46464f;letter-spacing:0.22px;left:150px;">Net Change in Cash</div>
<div class="t " style="top:789.50px;font-size:20.3px;line-height:25px;color:#e8223f;letter-spacing:0.9px;left:539.40px;width:148px;text-align:right;-webkit-text-stroke:0.5px #e8223f;"><span style="margin-right:1.5px">-</span>1 216,67 $</div>
<div class="t " style="top:789.50px;font-size:20.3px;line-height:25px;color:#e8223f;letter-spacing:0.9px;left:689.40px;width:148px;text-align:right;-webkit-text-stroke:0.5px #e8223f;"><span style="margin-right:1.5px">-</span>12 000,00 $</div>
<div class="t " style="top:789.50px;font-size:20.3px;line-height:25px;color:#46464f;left:838.50px;width:148px;text-align:right;">-</div>
<div class="t " style="top:789.50px;font-size:20.3px;line-height:25px;color:#46464f;left:988.50px;width:148px;text-align:right;">-</div>
<div class="t " style="top:789.50px;font-size:20.3px;line-height:25px;color:#46464f;left:1138.50px;width:148px;text-align:right;">-</div>
<div class="t " style="top:789.50px;font-size:20.3px;line-height:25px;color:#46464f;left:1288.50px;width:148px;text-align:right;">-</div>
<div class="t " style="top:789.50px;font-size:20.3px;line-height:25px;color:#46464f;left:1438.50px;width:148px;text-align:right;">-</div>
<div class="t " style="top:789.50px;font-size:20.3px;line-height:25px;color:#e8223f;letter-spacing:0.9px;left:1655.90px;width:200px;text-align:right;-webkit-text-stroke:0.5px #e8223f;"><span style="margin-right:1.5px">-</span>13 216,67 $</div>
<div class="t " style="top:844.50px;font-size:20.3px;line-height:25px;color:#46464f;letter-spacing:0.29px;left:151px;">Transfer between accounts (income)</div>
<div class="t " style="top:844.50px;font-size:20.3px;line-height:25px;color:#46464f;left:538.50px;width:148px;text-align:right;">-</div>
<div class="t " style="top:844.50px;font-size:20.3px;line-height:25px;color:#46464f;left:688.50px;width:148px;text-align:right;">-</div>
<div class="t " style="top:844.50px;font-size:20.3px;line-height:25px;color:#46464f;left:838.50px;width:148px;text-align:right;">-</div>
<div class="t " style="top:844.50px;font-size:20.3px;line-height:25px;color:#46464f;left:988.50px;width:148px;text-align:right;">-</div>
<div class="t " style="top:844.50px;font-size:20.3px;line-height:25px;color:#46464f;left:1138.50px;width:148px;text-align:right;">-</div>
<div class="t " style="top:844.50px;font-size:20.3px;line-height:25px;color:#46464f;left:1288.50px;width:148px;text-align:right;">-</div>
<div class="t " style="top:844.50px;font-size:20.3px;line-height:25px;color:#46464f;left:1438.50px;width:148px;text-align:right;">-</div>
<div class="t " style="top:844.50px;font-size:20.3px;line-height:25px;color:#46464f;left:1654.50px;width:200px;text-align:right;">-</div>
<div class="t " style="top:897.50px;font-size:20.3px;line-height:25px;color:#46464f;letter-spacing:0.46px;left:151px;">Transfer between accounts (write-off)</div>
<div class="t " style="top:897.50px;font-size:20.3px;line-height:25px;color:#46464f;left:538.50px;width:148px;text-align:right;">-</div>
<div class="t " style="top:897.50px;font-size:20.3px;line-height:25px;color:#46464f;left:688.50px;width:148px;text-align:right;">-</div>
<div class="t " style="top:897.50px;font-size:20.3px;line-height:25px;color:#46464f;left:838.50px;width:148px;text-align:right;">-</div>
<div class="t " style="top:897.50px;font-size:20.3px;line-height:25px;color:#46464f;left:988.50px;width:148px;text-align:right;">-</div>
<div class="t " style="top:897.50px;font-size:20.3px;line-height:25px;color:#46464f;left:1138.50px;width:148px;text-align:right;">-</div>
<div class="t " style="top:897.50px;font-size:20.3px;line-height:25px;color:#46464f;left:1288.50px;width:148px;text-align:right;">-</div>
<div class="t " style="top:897.50px;font-size:20.3px;line-height:25px;color:#46464f;left:1438.50px;width:148px;text-align:right;">-</div>
<div class="t " style="top:897.50px;font-size:20.3px;line-height:25px;color:#46464f;left:1654.50px;width:200px;text-align:right;">-</div>
<svg style="left:1616px;top:521px" width="36" height="36" viewBox="0 0 36 36"><circle cx="18" cy="18" r="18" fill="#b3b3b3"/><path d="M13.4,9.8 L22.3,17.8 L13.4,26.2" fill="none" stroke="#d6d6d6" stroke-width="2.8"/></svg>
<div class="abs" style="left:695px;top:723px;width:149px;height:51px;box-sizing:border-box;border:3px solid #3a5fe5"></div>
<div class="t " style="top:952.60px;font-size:20.3px;line-height:25px;color:#46464f;letter-spacing:0.29px;left:151px;">Money at the End of the Accounting</div>
<div class="t " style="top:981.00px;font-size:20.3px;line-height:25px;color:#46464f;letter-spacing:0.29px;left:151px;">Period</div>
<div class="t " style="top:952.60px;font-size:20.3px;line-height:25px;color:#46464f;letter-spacing:0.86px;left:539.86px;width:148px;text-align:right;">5 000,00 £</div>
<div class="t " style="top:981.00px;font-size:20.3px;line-height:25px;color:#46464f;letter-spacing:0.86px;left:539.86px;width:148px;text-align:right;">158 783,33 $</div>
<div class="t " style="top:952.60px;font-size:20.3px;line-height:25px;color:#46464f;letter-spacing:0.86px;left:689.86px;width:148px;text-align:right;">5 000,00 £</div>
<div class="t " style="top:981.00px;font-size:20.3px;line-height:25px;color:#46464f;letter-spacing:0.86px;left:689.86px;width:148px;text-align:right;">151 783,33 $</div>
<div class="t " style="top:952.60px;font-size:20.3px;line-height:25px;color:#46464f;letter-spacing:0.86px;left:839.86px;width:148px;text-align:right;">5 000,00 £</div>
<div class="t " style="top:981.00px;font-size:20.3px;line-height:25px;color:#46464f;letter-spacing:0.86px;left:839.86px;width:148px;text-align:right;">151 783,33 $</div>
<div class="t " style="top:952.60px;font-size:20.3px;line-height:25px;color:#46464f;letter-spacing:0.86px;left:989.86px;width:148px;text-align:right;">5 000,00 £</div>
<div class="t " style="top:981.00px;font-size:20.3px;line-height:25px;color:#46464f;letter-spacing:0.86px;left:989.86px;width:148px;text-align:right;">151 783,33 $</div>
<div class="t " style="top:952.60px;font-size:20.3px;line-height:25px;color:#46464f;letter-spacing:0.86px;left:1139.86px;width:148px;text-align:right;">5 000,00 £</div>
<div class="t " style="top:981.00px;font-size:20.3px;line-height:25px;color:#46464f;letter-spacing:0.86px;left:1139.86px;width:148px;text-align:right;">151 783,33 $</div>
<div class="t " style="top:952.60px;font-size:20.3px;line-height:25px;color:#46464f;letter-spacing:0.86px;left:1289.86px;width:148px;text-align:right;">5 000,00 £</div>
<div class="t " style="top:981.00px;font-size:20.3px;line-height:25px;color:#46464f;letter-spacing:0.86px;left:1289.86px;width:148px;text-align:right;">151 783,33 $</div>
<div class="t " style="top:952.60px;font-size:20.3px;line-height:25px;color:#46464f;letter-spacing:0.86px;left:1439.86px;width:148px;text-align:right;">5 000,00 £</div>
<div class="t " style="top:981.00px;font-size:20.3px;line-height:25px;color:#46464f;letter-spacing:0.86px;left:1439.86px;width:148px;text-align:right;">151 783,33 $</div>
<div class="t " style="top:952.60px;font-size:20.3px;line-height:25px;color:#46464f;letter-spacing:0.86px;left:1565.16px;width:100px;text-align:right;">5 0</div>
<div class="t " style="top:981.00px;font-size:20.3px;line-height:25px;color:#46464f;letter-spacing:0.86px;left:1564.16px;width:100px;text-align:right;">151 7</div>
<div class="t " style="top:967.00px;font-size:20.3px;line-height:25px;color:#46464f;left:1754.50px;width:100px;text-align:right;">-</div>
<div class="abs" style="left:1861px;top:945px;width:9px;height:70px;overflow:hidden"><div class="t " style="top:7.60px;font-size:20.3px;line-height:25px;color:#46464f;left:-2.4px;">0</div>
<div class="t " style="top:36.00px;font-size:20.3px;line-height:25px;color:#46464f;left:-2.4px;">3</div>
</div>
<div class="bord"></div>
</div>
</body></html>
